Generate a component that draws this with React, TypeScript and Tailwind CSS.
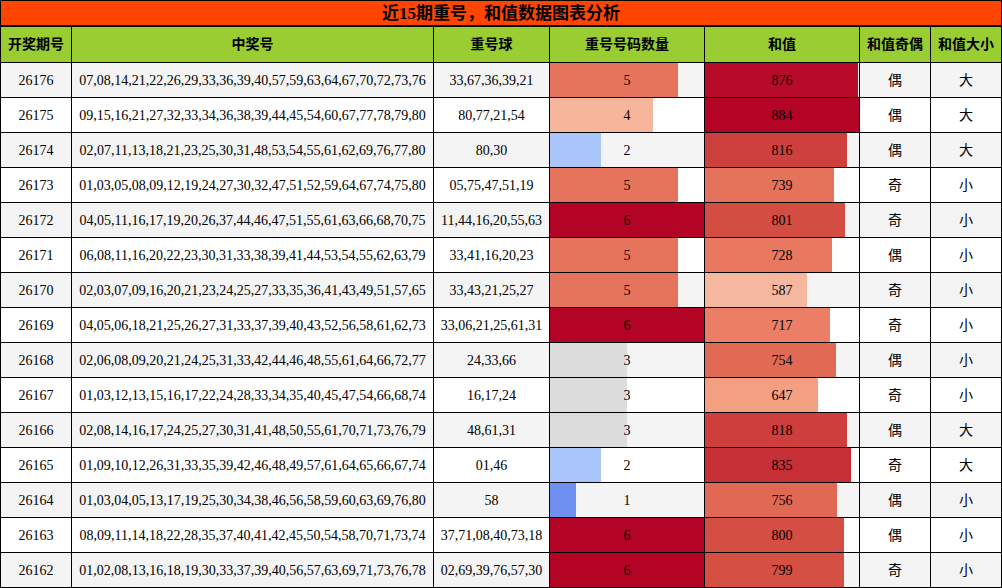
const rows: [string, string, string, number, number, string, string][] = [
  ['26176', '07,08,14,21,22,26,29,33,36,39,40,57,59,63,64,67,70,72,73,76', '33,67,36,39,21', 5, 876, '偶', '大'],
  ['26175', '09,15,16,21,27,32,33,34,36,38,39,44,45,54,60,67,77,78,79,80', '80,77,21,54', 4, 884, '偶', '大'],
  ['26174', '02,07,11,13,18,21,23,25,30,31,48,53,54,55,61,62,69,76,77,80', '80,30', 2, 816, '偶', '大'],
  ['26173', '01,03,05,08,09,12,19,24,27,30,32,47,51,52,59,64,67,74,75,80', '05,75,47,51,19', 5, 739, '奇', '小'],
  ['26172', '04,05,11,16,17,19,20,26,37,44,46,47,51,55,61,63,66,68,70,75', '11,44,16,20,55,63', 6, 801, '奇', '小'],
  ['26171', '06,08,11,16,20,22,23,30,31,33,38,39,41,44,53,54,55,62,63,79', '33,41,16,20,23', 5, 728, '偶', '小'],
  ['26170', '02,03,07,09,16,20,21,23,24,25,27,33,35,36,41,43,49,51,57,65', '33,43,21,25,27', 5, 587, '奇', '小'],
  ['26169', '04,05,06,18,21,25,26,27,31,33,37,39,40,43,52,56,58,61,62,73', '33,06,21,25,61,31', 6, 717, '奇', '小'],
  ['26168', '02,06,08,09,20,21,24,25,31,33,42,44,46,48,55,61,64,66,72,77', '24,33,66', 3, 754, '偶', '小'],
  ['26167', '01,03,12,13,15,16,17,22,24,28,33,34,35,40,45,47,54,66,68,74', '16,17,24', 3, 647, '奇', '小'],
  ['26166', '02,08,14,16,17,24,25,27,30,31,41,48,50,55,61,70,71,73,76,79', '48,61,31', 3, 818, '偶', '大'],
  ['26165', '01,09,10,12,26,31,33,35,39,42,46,48,49,57,61,64,65,66,67,74', '01,46', 2, 835, '奇', '大'],
  ['26164', '01,03,04,05,13,17,19,25,30,34,38,46,56,58,59,60,63,69,76,80', '58', 1, 756, '偶', '小'],
  ['26163', '08,09,11,14,18,22,28,35,37,40,41,42,45,50,54,58,70,71,73,74', '37,71,08,40,73,18', 6, 800, '偶', '小'],
  ['26162', '01,02,08,13,16,18,19,30,33,37,39,40,56,57,63,69,71,73,76,78', '02,69,39,76,57,30', 6, 799, '奇', '小'],
];

// coolwarm colormap stops, every 0.1
const stops = [
  [59, 76, 192], [85, 114, 223], [123, 159, 249], [158, 190, 255], [192, 212, 245],
  [221, 220, 220], [242, 203, 183], [247, 172, 142], [238, 132, 104], [214, 82, 68], [180, 4, 38],
];

function coolwarm(t: number) {
  const x = Math.min(Math.max(t, 0), 1) * 10;
  const i = Math.min(Math.floor(x), 9);
  const f = x - i;
  const c = stops[i].map((v, k) => Math.round(v + (stops[i + 1][k] - v) * f));
  return `rgb(${c[0]},${c[1]},${c[2]})`;
}

function bar(frac: number) {
  const pct = (frac * 100).toFixed(1);
  return { backgroundImage: `linear-gradient(90deg, ${coolwarm(frac)} ${pct}%, transparent ${pct}%)` };
}

const cols = 'grid grid-cols-[71px_362px_116px_155px_155px_71px_71px]';
const cell = 'flex items-center justify-center border-r border-b border-black';
const headers = ['开奖期号', '中奖号', '重号球', '重号号码数量', '和值', '和值奇偶', '和值大小'];

export default function App() {
  return (
    <div className="w-[1002px] border-l border-t border-black bg-white text-black text-[14px] font-['Liberation_Serif','Noto_Sans_CJK_SC',serif]">
      <div className="h-[26px] flex items-center justify-center bg-[#ff4500] border-r border-b-2 border-black text-[17px] font-bold leading-none">
        近15期重号，和值数据图表分析
      </div>
      <div className={`${cols} bg-[#9acd32] font-bold`}>
        {headers.map((h) => (
          <div key={h} className={`${cell} h-[36px]`}>{h}</div>
        ))}
      </div>
      {rows.map((r, i) => (
        <div key={r[0]} className={`${cols} ${i % 2 === 0 ? 'bg-[#f4f4f4]' : 'bg-white'}`}>
          <div className={`${cell} h-[35px]`}>{r[0]}</div>
          <div className={`${cell} h-[35px]`}>{r[1]}</div>
          <div className={`${cell} h-[35px]`}>{r[2]}</div>
          <div className={`${cell} h-[35px]`} style={bar(r[3] / 6)}>{r[3]}</div>
          <div className={`${cell} h-[35px]`} style={bar(r[4] / 884)}>{r[4]}</div>
          <div className={`${cell} h-[35px]`}>{r[5]}</div>
          <div className={`${cell} h-[35px]`}>{r[6]}</div>
        </div>
      ))}
    </div>
  );
}
